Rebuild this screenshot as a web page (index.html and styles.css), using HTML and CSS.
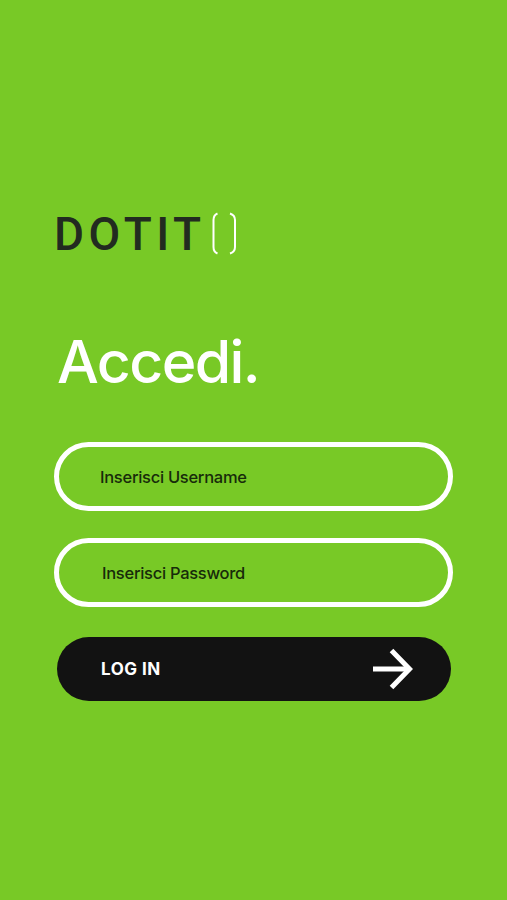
FILE: index.html
```html
<!DOCTYPE html>
<html lang="it">
<head>
  <meta charset="UTF-8" />
  <meta name="viewport" content="width=device-width, initial-scale=1.0"/>
  <title>DOTIT - Accedi</title>
  <link rel="stylesheet" href="styles.css">
</head>

<body>
  <main class="login">
    <div class="logo">
      <span class="logo-text">DOTIT</span>
      <svg class="logo-brackets" width="28" height="44" viewBox="0 0 28 44" fill="none" stroke="white" stroke-width="2">
        <path d="M7.500 1.500C5 2.500 3.500 4.500 3.500 8V35C3.500 38.500 5 40.500 7.500 41.500"/>
        <path d="M20 1.500C23 2.500 25 4.500 25 8V35C25 38.500 23 40.500 20 41.500"/>
      </svg>
    </div>

    <h1 class="title">Accedi.</h1>

    <form class="login-form">
      <input class="field" type="text" placeholder="Inserisci Username">
      <input class="field field-password" type="password" placeholder="Inserisci Password">
      <button class="login-btn" type="button">
        <span class="login-label">LOG IN</span>
        <svg width="40" height="42" viewBox="0 0 40 42" fill="none" stroke="white" stroke-width="5">
          <path d="M0 21H36"/>
          <path d="M18.500 2.500L36.500 21L18.500 39.500"/>
        </svg>
      </button>
    </form>
  </main>
</body>
</html>
```

FILE: styles.css
```css
body {
  margin: 0;
  background: #78c926;
  font-family: 'Inter', sans-serif;
}

.login {
  box-sizing: border-box;
  min-height: 100vh;
  padding: 212px 54px 0;
}

/* logo */
.logo {
  display: flex;
  align-items: center;
  height: 44px;
}

.logo-text {
  width: 156px;
  font-family: 'Roboto', sans-serif;
  font-size: 46px;
  font-weight: 500;
  line-height: 44px;
  letter-spacing: 4.5px;
  color: #222b20;
}

.title {
  margin: 70px 0 0 3px;
  font-size: 59px;
  font-weight: 500;
  line-height: 72px;
  letter-spacing: -1.6px;
  color: white;
}

/* login form */
.login-form {
  display: flex;
  flex-direction: column;
  margin-top: 44px;
}

.field {
  box-sizing: border-box;
  width: 399px;
  height: 69px;
  margin: 0 0 27px;
  padding: 1px 41px 0;
  border: 5px solid white;
  border-radius: 35px;
  background: none;
  font-family: inherit;
  font-size: 16.5px;
  font-weight: 500;
  letter-spacing: -0.28px;
  outline: none;
}

.field-password {
  padding-left: 43px;
}

.field::placeholder {
  color: #172b0a;
  opacity: 1;
}

.login-btn {
  display: flex;
  align-items: center;
  justify-content: space-between;
  width: 394px;
  height: 64px;
  margin: 3px 0 0 3px;
  padding: 0 38px 0 44px;
  border: none;
  border-radius: 32px;
  background: #121212;
  color: white;
  font-family: inherit;
  font-size: 17px;
  font-weight: 700;
  letter-spacing: 0.5px;
  cursor: pointer;
}
```
